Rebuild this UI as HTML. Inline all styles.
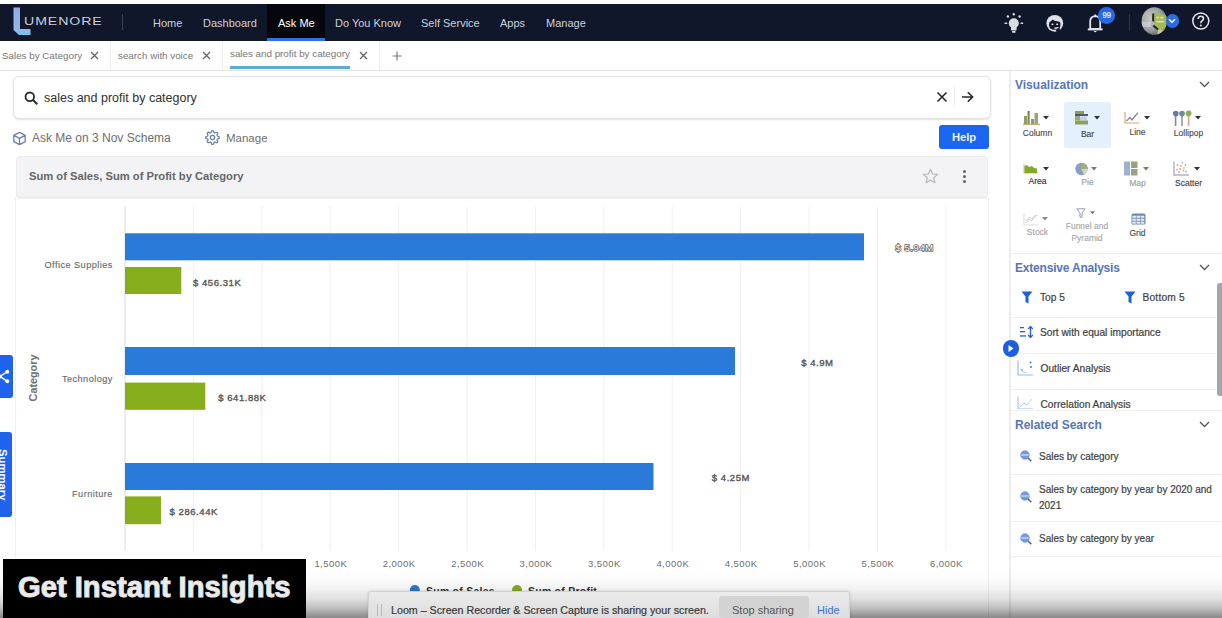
<!DOCTYPE html>
<html><head><meta charset="utf-8">
<style>
*{margin:0;padding:0;box-sizing:border-box}
html,body{width:1222px;height:618px;overflow:hidden;background:#fff;font-family:"Liberation Sans",sans-serif;position:relative}
.a{position:absolute;white-space:nowrap}
#nav{position:absolute;left:0;top:4px;width:1222px;height:37px;background:#10172a}
.nt{position:absolute;top:1px;height:37px;line-height:37px;font-size:11px;color:#cdd1dc}
#tabs{position:absolute;left:0;top:41px;width:1222px;height:30px;background:#fff;border-bottom:1px solid #e4e4e4}
.tt{position:absolute;font-size:9.8px;color:#777;top:9px;line-height:12px}
.vsep{position:absolute;width:1px;background:#e9e9e9}
.hsep{position:absolute;height:1px;background:#ededed}
.pt{position:absolute;font-size:12px;font-weight:bold;color:#5576ba;line-height:14px}
.vl{position:absolute;font-size:8.5px;color:#4c4c4c;line-height:10px;text-align:center;-webkit-text-stroke:0.15px currentColor}
.it{position:absolute;font-size:10.2px;color:#3e3e3e;line-height:12px;-webkit-text-stroke:0.2px #3e3e3e}
</style></head><body>

<!-- NAV -->
<div id="nav">
  <svg class="a" style="left:12px;top:2px" width="22" height="30" viewBox="0 0 22 30">
    <defs><linearGradient id="lg" x1="0" y1="0" x2="0" y2="1"><stop offset="0" stop-color="#8eaee6"/><stop offset="0.8" stop-color="#96b6ea"/><stop offset="1" stop-color="#6fc7e6"/></linearGradient></defs>
    <path d="M1.5 1.5 H8 V23 H18.5 V29 H7 L1.5 24 Z" fill="url(#lg)"/>
  </svg>
  <div class="a" style="left:23.9px;top:9.9px;font-size:11.4px;letter-spacing:0.75px;color:#ccd0da;line-height:14px;transform:scaleX(1.24);transform-origin:0 0">UMENORE</div>
  <div class="a" style="left:122px;top:10px;width:1px;height:16px;background:#3b4152"></div>
  <div class="nt" style="left:153px">Home</div>
  <div class="nt" style="left:203px">Dashboard</div>
  <div class="a" style="left:267px;top:0;width:58px;height:37px;background:#05070c"></div>
  <div class="a" style="left:267px;top:34px;width:58px;height:3px;background:#2f6fe4"></div>
  <div class="nt" style="left:278px;color:#fff">Ask Me</div>
  <div class="nt" style="left:335px">Do You Know</div>
  <div class="nt" style="left:421px">Self Service</div>
  <div class="nt" style="left:500px">Apps</div>
  <div class="nt" style="left:546px">Manage</div>
  <!-- right icons -->
  <svg class="a" style="left:1003px;top:8px" width="22" height="24" viewBox="0 0 22 24">
    <g fill="#d8dce6">
      <circle cx="10.8" cy="11.2" r="5"/>
      <path d="M8 14 H13.6 V17.5 Q13.6 18.4 12.7 18.4 H8.9 Q8 18.4 8 17.5 Z"/>
      <rect x="9" y="19" width="3.6" height="1.8" rx="0.6"/>
      <circle cx="10.8" cy="2.3" r="1.2"/>
      <circle cx="4.9" cy="4.5" r="1.2"/>
      <circle cx="16.6" cy="4.5" r="1.2"/>
      <rect x="1.4" y="10.4" width="3" height="1.6" rx="0.8"/>
      <rect x="17.3" y="10.4" width="3" height="1.6" rx="0.8"/>
    </g>
  </svg>
  <svg class="a" style="left:1043px;top:6px" width="25" height="25" viewBox="0 0 25 25">
    <circle cx="11.8" cy="13.3" r="8.4" fill="#dde0e8"/>
    <path d="M6 14.5 Q6 11.5 8 11 Q9.2 10.6 9.8 9.6 Q11 11.2 14 11.2 Q17.2 11.2 17.4 13.5 L17.4 15.5 Q17.2 19.8 11.6 19.8 Q6 19.8 6 14.5 Z" fill="#10172a"/>
    <rect x="8.4" y="13.5" width="2" height="1.5" rx="0.6" fill="#dde0e8"/>
    <rect x="13.2" y="13.5" width="2" height="1.5" rx="0.6" fill="#dde0e8"/>
    <path d="M11.5 18.3 Q14 18.3 15.6 17.4" fill="none" stroke="#dde0e8" stroke-width="1.5"/>
    <path d="M16.6 18.6 A8 8 0 0 1 13.3 21" fill="none" stroke="#10172a" stroke-width="2.4"/>
  </svg>
  <svg class="a" style="left:1086px;top:6px" width="18" height="24" viewBox="0 0 18 24">
    <path d="M4.2 18.8 V11.5 Q4.2 6.5 9.3 6.2 Q14.2 6.5 14.2 11.5 V18.8 Z" fill="none" stroke="#dfe2ea" stroke-width="1.8"/>
    <path d="M1.8 19.4 H16.6" stroke="#dfe2ea" stroke-width="2"/>
    <path d="M7.6 21 Q9.2 23.5 10.8 21 Z" fill="#dfe2ea"/>
    <rect x="8.4" y="4.4" width="1.7" height="2.2" fill="#dfe2ea"/>
  </svg>
  <div class="a" style="left:1098.3px;top:3px;width:16.6px;height:16.6px;border-radius:50%;background:#2668e6;color:#cfe0ff;font-size:8.5px;line-height:16.6px;text-align:center;font-weight:bold;letter-spacing:-0.3px">99</div>
  <div class="a" style="left:1129px;top:10px;width:1px;height:17px;background:#2c3344"></div>
  <svg class="a" style="left:1141px;top:3px" width="27" height="28" viewBox="0 0 27 28">
    <defs><clipPath id="av"><ellipse cx="13.3" cy="14.1" rx="12.7" ry="13.8"/></clipPath>
    <radialGradient id="avg" cx="0.35" cy="0.4" r="0.7"><stop offset="0" stop-color="#c9cacb"/><stop offset="0.6" stop-color="#9c9e9f"/><stop offset="1" stop-color="#5d6062"/></radialGradient></defs>
    <g clip-path="url(#av)">
      <rect x="0" y="0" width="27" height="28" fill="url(#avg)"/>
      <rect x="0" y="15" width="10" height="5" fill="#d6d8da" opacity=".6"/>
      <path d="M11.2 6.5 L13.6 6.5 L13.4 15 L11 14 Z" fill="#2b2d2e"/>
      <path d="M13.4 6.5 Q21 5 25.6 9 L25.6 23 Q20 24 15 22 L13.4 16 Z" fill="#a3bb57"/>
      <rect x="15.5" y="9.8" width="2.6" height="1.6" fill="#e8dcc0"/><rect x="19.5" y="9.8" width="2.6" height="1.6" fill="#e8dcc0"/>
      <rect x="15.5" y="13.8" width="7" height="1.6" fill="#e8dcc0"/>
      <path d="M12.3 18.5 L17 22.6" stroke="#1e2020" stroke-width="2"/>
      <path d="M17 23 Q21 21.5 24 24 L22 28 L16 28 Z" fill="#c9c0a0"/>
      <path d="M21 22 L26 21 L26 27 Z" fill="#7c8f4a"/>
      <path d="M0 24 Q8 27 13 26 L13 28 L0 28 Z" fill="#6d7072"/>
    </g>
  </svg>
  <div class="a" style="left:1165.6px;top:10px;width:13.6px;height:13.6px;border-radius:50%;background:#2a6de6"></div>
  <svg class="a" style="left:1168.4px;top:14.2px" width="8" height="6" viewBox="0 0 8 6"><path d="M1 1.3 L4 4.2 L7 1.3" fill="none" stroke="#fff" stroke-width="1.5"/></svg>
  <svg class="a" style="left:1190px;top:6px" width="22" height="22" viewBox="0 0 22 22">
    <circle cx="10.8" cy="11" r="8" fill="none" stroke="#e3e6ed" stroke-width="1.5"/>
    <path d="M8.2 8.9 Q8.2 6.2 10.8 6.2 Q13.5 6.2 13.5 8.6 Q13.5 10.1 11.9 11 Q10.8 11.6 10.8 13.3" fill="none" stroke="#e3e6ed" stroke-width="1.6"/>
    <circle cx="10.8" cy="15.6" r="1" fill="#e3e6ed"/>
  </svg>
</div>

<!-- TABS -->
<div id="tabs">
  <div class="tt" style="left:2px">Sales by Category</div>
  <svg class="a" style="left:90px;top:10px" width="9" height="9" viewBox="0 0 9 9"><path d="M1 1 L8 8 M8 1 L1 8" stroke="#666" stroke-width="1.3"/></svg>
  <div class="vsep" style="left:110px;top:0;height:29px;background:#eee"></div>
  <div class="tt" style="left:118px">search with voice</div>
  <svg class="a" style="left:202px;top:10px" width="9" height="9" viewBox="0 0 9 9"><path d="M1 1 L8 8 M8 1 L1 8" stroke="#666" stroke-width="1.3"/></svg>
  <div class="vsep" style="left:222px;top:0;height:29px;background:#eee"></div>
  <div class="tt" style="left:230px;top:7px">sales and profit by category</div>
  <div class="a" style="left:230px;top:25px;width:120px;height:3px;background:#5aaed6"></div>
  <svg class="a" style="left:359px;top:10px" width="9" height="9" viewBox="0 0 9 9"><path d="M1 1 L8 8 M8 1 L1 8" stroke="#666" stroke-width="1.3"/></svg>
  <div class="vsep" style="left:379px;top:0;height:29px;background:#eee"></div>
  <svg class="a" style="left:392px;top:10px" width="10" height="10" viewBox="0 0 10 10"><path d="M5 0.5 V9.5 M0.5 5 H9.5" stroke="#777" stroke-width="1.2"/></svg>
</div>

<!-- SEARCH -->
<div class="a" style="left:12.5px;top:75.5px;width:978px;height:43px;border:1px solid #e3e3e3;border-radius:6px;box-shadow:0 1px 2px rgba(0,0,0,.12);background:#fff"></div>
<svg class="a" style="left:24px;top:91px" width="15" height="14" viewBox="0 0 15 14">
  <circle cx="5.8" cy="5.8" r="4.3" fill="none" stroke="#2b2b2b" stroke-width="1.8"/>
  <path d="M9 9 L13.3 13.2" stroke="#2b2b2b" stroke-width="2"/>
</svg>
<div class="a" style="left:44px;top:91px;font-size:12.5px;color:#303030;line-height:15px">sales and profit by category</div>
<svg class="a" style="left:936px;top:91px" width="12" height="12" viewBox="0 0 12 12"><path d="M1.5 1.5 L10.5 10.5 M10.5 1.5 L1.5 10.5" stroke="#2a2a2a" stroke-width="1.6"/></svg>
<div class="a" style="left:954px;top:86px;width:1px;height:21px;background:#eee"></div>
<svg class="a" style="left:961px;top:91px" width="13" height="12" viewBox="0 0 13 12"><path d="M1 6 H11.5 M6.8 1.2 L11.6 6 L6.8 10.8" fill="none" stroke="#2a2a2a" stroke-width="1.6"/></svg>

<!-- schema row -->
<svg class="a" style="left:12px;top:131px" width="15" height="15" viewBox="0 0 15 15">
  <path d="M7.5 1.3 L13.2 4.3 V10.7 L7.5 13.7 L1.8 10.7 V4.3 Z M1.8 4.3 L7.5 7.3 L13.2 4.3 M7.5 7.3 V13.7" fill="none" stroke="#6a7fa8" stroke-width="1.3" stroke-linejoin="round"/>
</svg>
<div class="a" style="left:32px;top:131px;font-size:12px;color:#6e6e6e;line-height:15px">Ask Me on 3 Nov Schema</div>
<svg class="a" style="left:205px;top:130px" width="15" height="15" viewBox="0 0 24 24">
  <path d="M12 15.5a3.5 3.5 0 1 0 0-7 3.5 3.5 0 0 0 0 7z" fill="none" stroke="#6a7fa8" stroke-width="2"/>
  <path d="M19.4 15a1.65 1.65 0 0 0 .33 1.82l.06.06a2 2 0 1 1-2.83 2.83l-.06-.06a1.65 1.65 0 0 0-1.82-.33 1.65 1.650 0 0 0-1 1.51V21a2 2 0 1 1-4 0v-.09A1.65 1.65 0 0 0 9 19.4a1.65 1.65 0 0 0-1.82.33l-.06.06a2 2 0 1 1-2.83-2.830l.06-.06A1.65 1.65 0 0 0 4.68 15a1.65 1.65 0 0 0-1.51-1H3a2 2 0 1 1 0-4h.09A1.65 1.65 0 0 0 4.6 9a1.65 1.65 0 0 0-.33-1.82l-.06-.06a2 2 0 1 1 2.83-2.83l.06.06A1.65 1.65 0 0 0 9 4.68a1.65 1.65 0 0 0 1-1.51V3a2 2 0 1 1 4 0v.09a1.65 1.65 0 0 0 1 1.51 1.65 1.65 0 0 0 1.82-.33l.06-.06a2 2 0 1 1 2.83 2.83l-.06.06A1.65 1.65 0 0 0 19.4 9a1.65 1.65 0 0 0 1.51 1H21a2 2 0 1 1 0 4h-.09a1.65 1.65 0 0 0-1.51 1z" fill="none" stroke="#6a7fa8" stroke-width="2"/>
</svg>
<div class="a" style="left:226px;top:131px;font-size:11.5px;color:#6e6e6e;line-height:15px">Manage</div>
<div class="a" style="left:939px;top:125px;width:50px;height:24px;border-radius:3px;background:#1a66ee;color:#eef3ff;font-size:11.2px;font-weight:bold;line-height:24px;text-align:center">Help</div>

<!-- CARD -->
<div class="a" style="left:15.5px;top:155.5px;width:972px;height:42px;background:#f3f3f6;border:1px solid #ededf0;border-radius:4px;box-shadow:0 1px 1px rgba(0,0,0,.06)"></div>
<div class="a" style="left:29px;top:170px;font-size:11.2px;font-weight:bold;color:#666;line-height:13px">Sum of Sales, Sum of Profit by Category</div>
<svg class="a" style="left:922px;top:168px" width="17" height="16" viewBox="0 0 24 23"><path d="M12 1.8 L14.9 8.6 L22.2 9.2 L16.6 14 L18.3 21.2 L12 17.3 L5.7 21.2 L7.4 14 L1.8 9.2 L9.1 8.6 Z" fill="none" stroke="#b4b4b8" stroke-width="1.6" stroke-linejoin="round"/></svg>
<div class="a" style="left:963px;top:170px;width:3px;height:3px;border-radius:50%;background:#666"></div>
<div class="a" style="left:963px;top:175px;width:3px;height:3px;border-radius:50%;background:#666"></div>
<div class="a" style="left:963px;top:180px;width:3px;height:3px;border-radius:50%;background:#666"></div>
<div class="a" style="left:15px;top:198px;width:1px;height:420px;background:#efeff2"></div>
<div class="a" style="left:988px;top:198px;width:1px;height:420px;background:#f0f0f2"></div>

<!-- CHART -->
<svg class="a" style="left:0;top:0" width="1000" height="618" viewBox="0 0 1000 618">
  <g stroke="#efeff1" stroke-width="1">
    <path d="M125 206.5 V551 M193.4 206.5 V551 M261.8 206.5 V551 M330.2 206.5 V551 M398.6 206.5 V551 M467 206.5 V551 M535.4 206.5 V551 M603.8 206.5 V551 M672.2 206.5 V551 M740.6 206.5 V551 M809 206.5 V551 M877.4 206.5 V551 M945.8 206.5 V551"/>
  </g>
  <path d="M125 206.5 V551" stroke="#e3e3e8"/>
  <g fill="#2a7ad9">
    <rect x="125" y="233.3" width="739" height="27"/>
    <rect x="125" y="347" width="610" height="28"/>
    <rect x="125" y="463" width="528.5" height="27"/>
  </g>
  <g fill="#86ae1c">
    <rect x="125" y="267" width="56.3" height="27"/>
    <rect x="125" y="382.6" width="80.3" height="27.2"/>
    <rect x="125" y="496.4" width="36.1" height="27.8"/>
  </g>
  <g font-family="Liberation Sans" font-size="9.2" fill="#6c6c6c" letter-spacing="0.45" text-anchor="end" stroke="#6c6c6c" stroke-width="0.15">
    <text x="112.9" y="267.8">Office Supplies</text>
    <text x="112.9" y="382">Technology</text>
    <text x="112.9" y="497">Furniture</text>
  </g>
  <text transform="translate(37 378) rotate(-90)" text-anchor="middle" font-family="Liberation Sans" font-size="10.8" font-weight="bold" fill="#707070">Category</text>
  <g font-family="Liberation Sans" font-size="9.5" fill="#555" stroke="#555" stroke-width="0.35" letter-spacing="0.55">
    <text x="193" y="285.8">$ 456.31K</text>
    <text x="218.2" y="400.8">$ 641.88K</text>
    <text x="169.6" y="515.3">$ 286.44K</text>
    <text x="801.2" y="365.6">$ 4.9M</text>
    <text x="711.8" y="481.3">$ 4.25M</text>
    <text x="895.5" y="251.1" stroke="#666" stroke-width="1.6" fill="#fff" paint-order="stroke">$ 5.94M</text>
  </g>
  <g font-family="Liberation Sans" font-size="9.5" fill="#6e6e6e" letter-spacing="0.45" text-anchor="middle">
    <text x="330.8" y="567.3">1,500K</text>
    <text x="399.2" y="567.3">2,000K</text>
    <text x="467.6" y="567.3">2,500K</text>
    <text x="536" y="567.3">3,000K</text>
    <text x="604.4" y="567.3">3,500K</text>
    <text x="672.8" y="567.3">4,000K</text>
    <text x="741.2" y="567.3">4,500K</text>
    <text x="809.6" y="567.3">5,000K</text>
    <text x="878" y="567.3">5,500K</text>
    <text x="946.4" y="567.3">6,000K</text>
  </g>
  <circle cx="414.8" cy="590" r="5" fill="#2a7ad9"/>
  <circle cx="517" cy="590" r="5" fill="#86ae1c"/>
  <g font-family="Liberation Sans" font-size="10.4" font-weight="bold" fill="#333" letter-spacing="0.3">
    <text x="426" y="595">Sum of Sales</text>
    <text x="528" y="595">Sum of Profit</text>
  </g>
</svg>

<!-- left floating tabs -->
<div class="a" style="left:-3px;top:355px;width:16px;height:43px;border-radius:3px;background:#1e62ee"></div>
<svg class="a" style="left:0;top:368px" width="10" height="17" viewBox="0 0 10 17">
  <path d="M7.3 3.7 L0 8.4 L7.3 13.3" fill="none" stroke="#fff" stroke-width="1.4"/>
  <circle cx="7.3" cy="3.7" r="2" fill="#fff"/><circle cx="7.3" cy="13.3" r="2" fill="#fff"/><circle cx="0" cy="8.4" r="2" fill="#fff"/>
</svg>
<div class="a" style="left:-3px;top:431.5px;width:15px;height:85px;border-radius:3px;background:#1e62ee"></div>
<div class="a" style="left:8.5px;top:449px;width:0;height:0">
  <div style="position:absolute;left:0;top:0;transform:rotate(90deg);transform-origin:0 0;font-size:11.3px;font-weight:bold;color:#fff;line-height:12px;white-space:nowrap">Summary</div>
</div>

<!-- RIGHT PANEL -->
<div class="a" style="left:1009px;top:71px;width:2px;height:547px;background:#ececee"></div>
<div class="pt" style="left:1015px;top:78px">Visualization</div>
<svg class="a" style="left:1199px;top:81px" width="11" height="7" viewBox="0 0 11 7"><path d="M1 1 L5.5 5.5 L10 1" fill="none" stroke="#555" stroke-width="1.3"/></svg>
<div class="a" style="left:1064px;top:101.5px;width:47px;height:46px;background:#e4f1fc;border-radius:2px"></div>


<!-- viz icons row1 -->
<svg class="a" style="left:1023px;top:110px" width="17" height="15" viewBox="0 0 17 15">
  <rect x="1" y="6" width="3" height="9" fill="#8e9e5e"/><rect x="4.5" y="1" width="2.2" height="14" fill="#7b8a58"/>
  <rect x="8" y="9" width="3" height="6" fill="#8e9e5e"/><rect x="11.5" y="3" width="3.5" height="12" fill="#9aa67a"/>
  <rect x="0" y="13.8" width="17" height="1.2" fill="#c9a77a"/>
</svg>
<svg class="a" style="left:1043px;top:116px" width="6" height="4" viewBox="0 0 6 4"><path d="M0 0 H6 L3 3.5 Z" fill="#333"/></svg>
<div class="vl" style="left:1022px;top:128px;width:31px">Column</div>

<svg class="a" style="left:1074px;top:109px" width="15" height="16" viewBox="0 0 15 16">
  <rect x="1" y="2" width="9" height="4.5" fill="#8e9e5e"/><rect x="1" y="5" width="13" height="2" fill="#4b5870"/>
  <rect x="1" y="7" width="5" height="4.5" fill="#9aa67a"/><rect x="6" y="7.5" width="7" height="3.5" fill="#c8cde8"/>
  <rect x="1" y="11.5" width="13" height="4" fill="#8e9e5e"/>
</svg>
<svg class="a" style="left:1094px;top:116px" width="6" height="4" viewBox="0 0 6 4"><path d="M0 0 H6 L3 3.5 Z" fill="#333"/></svg>
<div class="vl" style="left:1072px;top:128.5px;width:31px;color:#444">Bar</div>

<svg class="a" style="left:1124px;top:111px" width="16" height="13" viewBox="0 0 16 13">
  <path d="M1 1 V12 H15" fill="none" stroke="#d9a46a" stroke-width="1.1"/>
  <path d="M2.5 10 L6 6.5 L8 9 L11.5 4.5 L14 2" fill="none" stroke="#7e8696" stroke-width="1.3"/>
</svg>
<svg class="a" style="left:1144px;top:116px" width="6" height="4" viewBox="0 0 6 4"><path d="M0 0 H6 L3 3.5 Z" fill="#333"/></svg>
<div class="vl" style="left:1122px;top:127px;width:31px">Line</div>

<svg class="a" style="left:1173px;top:110px" width="19" height="16" viewBox="0 0 19 16">
  <rect x="1.8" y="4" width="1.6" height="12" fill="#7d8aa4"/><circle cx="2.8" cy="3.6" r="2.8" fill="#6b7a98"/>
  <rect x="8.2" y="4" width="1.6" height="12" fill="#8f9aab"/><circle cx="9" cy="3.6" r="2.8" fill="#75869a"/>
  <rect x="14.8" y="4" width="1.6" height="12" fill="#c9a98a"/><circle cx="15.6" cy="3.4" r="2.9" fill="#8fb04e"/>
</svg>
<svg class="a" style="left:1195px;top:116px" width="6" height="4" viewBox="0 0 6 4"><path d="M0 0 H6 L3 3.5 Z" fill="#333"/></svg>
<div class="vl" style="left:1173px;top:128px;width:31px">Lollipop</div>

<!-- row2 -->
<svg class="a" style="left:1023px;top:162px" width="16" height="12" viewBox="0 0 16 12">
  <path d="M1 11 V2 M1 11 H15" stroke="#d9b0a0" stroke-width="1"/>
  <path d="M1.5 11 V4 L4 3 L6 5 L9 4 L11 6 L14 6.5 V11 Z" fill="#86a92a"/>
</svg>
<svg class="a" style="left:1043px;top:167px" width="6" height="4" viewBox="0 0 6 4"><path d="M0 0 H6 L3 3.5 Z" fill="#333"/></svg>
<div class="vl" style="left:1022px;top:176px;width:31px;color:#333">Area</div>

<svg class="a" style="left:1075px;top:162px" width="14" height="14" viewBox="0 0 14 14">
  <circle cx="6.5" cy="7" r="6.2" fill="#8aa0c0"/>
  <path d="M6.5 7 L6.5 0.8 A6.2 6.2 0 0 1 12.7 7 Z" fill="#a2ae78"/>
  <path d="M6.5 7 L12.7 7 A6.2 6.2 0 0 1 9 12.7 Z" fill="#d0d6cc"/>
</svg>
<svg class="a" style="left:1091px;top:167px" width="6" height="4" viewBox="0 0 6 4"><path d="M0 0 H6 L3 3.5 Z" fill="#777"/></svg>
<div class="vl" style="left:1072px;top:176.5px;width:31px;color:#a0a0a0">Pie</div>

<svg class="a" style="left:1124px;top:161px" width="14" height="15" viewBox="0 0 14 15">
  <rect x="0" y="0.5" width="6" height="14" fill="#9fb0cc"/>
  <rect x="7" y="0.5" width="6.5" height="6.5" fill="#97a37a"/>
  <rect x="7" y="8" width="6.5" height="6.5" fill="#98a286"/>
</svg>
<svg class="a" style="left:1143px;top:167px" width="6" height="4" viewBox="0 0 6 4"><path d="M0 0 H6 L3 3.5 Z" fill="#777"/></svg>
<div class="vl" style="left:1122px;top:177.5px;width:31px;color:#a0a0a0">Map</div>

<svg class="a" style="left:1173px;top:161px" width="16" height="15" viewBox="0 0 16 15">
  <path d="M1 0.5 V14 H16" fill="none" stroke="#a8b4c8" stroke-width="1.4"/>
  <g fill="#e0a872"><circle cx="4.5" cy="4" r="0.9"/><circle cx="8" cy="5" r="0.9"/><circle cx="12.5" cy="4" r="0.9"/><circle cx="4" cy="8.5" r="0.9"/><circle cx="7" cy="8" r="0.9"/><circle cx="10.5" cy="9.5" r="0.9"/><circle cx="13" cy="10.5" r="0.9"/><circle cx="6" cy="11" r="0.9"/></g>
  <g fill="#9aa"><circle cx="9.5" cy="2" r="0.8"/><circle cx="11" cy="7" r="0.8"/></g>
</svg>
<svg class="a" style="left:1194px;top:167px" width="6" height="4" viewBox="0 0 6 4"><path d="M0 0 H6 L3 3.5 Z" fill="#333"/></svg>
<div class="vl" style="left:1173px;top:177.5px;width:31px;color:#444">Scatter</div>

<!-- row3 -->
<svg class="a" style="left:1023px;top:213px" width="16" height="13" viewBox="0 0 16 13">
  <path d="M1 0.5 V12 H15" fill="none" stroke="#d8dce4" stroke-width="1.1"/>
  <path d="M2.5 10 L6 6 L8.5 8 L12 3 L14.5 2.5" fill="none" stroke="#c8ccd6" stroke-width="1"/>
  <path d="M3 8 L6.5 4 L9 6 L13 1.5" fill="none" stroke="#e8c0b8" stroke-width="0.9"/>
</svg>
<svg class="a" style="left:1042px;top:217px" width="6" height="4" viewBox="0 0 6 4"><path d="M0 0 H6 L3 3.5 Z" fill="#888"/></svg>
<div class="vl" style="left:1022px;top:227px;width:31px;color:#a8a8a8">Stock</div>

<svg class="a" style="left:1076px;top:208px" width="10" height="10" viewBox="0 0 10 10">
  <path d="M0.8 0.8 H9.2 L6 5 V9.2 H4 V5 Z" fill="none" stroke="#8b93a3" stroke-width="0.9"/>
</svg>
<svg class="a" style="left:1090px;top:211px" width="5" height="4" viewBox="0 0 6 4"><path d="M0 0 H6 L3 3.5 Z" fill="#777"/></svg>
<div class="vl" style="left:1062px;top:221px;width:50px;color:#a8a8a8;line-height:11.6px">Funnel and<br>Pyramid</div>

<svg class="a" style="left:1131px;top:212.5px" width="15" height="12" viewBox="0 0 15 12"><rect x="0.5" y="0.5" width="14" height="11" rx="1.5" fill="#7186ab"/><rect x="1.30" y="2.70" width="3.6" height="2.1" fill="#e6ecf6"/><rect x="5.50" y="2.70" width="3.6" height="2.1" fill="#e6ecf6"/><rect x="9.70" y="2.70" width="3.6" height="2.1" fill="#e6ecf6"/><rect x="1.30" y="5.65" width="3.6" height="2.1" fill="#e6ecf6"/><rect x="5.50" y="5.65" width="3.6" height="2.1" fill="#e6ecf6"/><rect x="9.70" y="5.65" width="3.6" height="2.1" fill="#e6ecf6"/><rect x="1.30" y="8.60" width="3.6" height="2.1" fill="#e6ecf6"/><rect x="5.50" y="8.60" width="3.6" height="2.1" fill="#e6ecf6"/><rect x="9.70" y="8.60" width="3.6" height="2.1" fill="#e6ecf6"/></svg>
<div class="vl" style="left:1122px;top:228px;width:31px;color:#4a4a4a">Grid</div>

<div class="hsep" style="left:1010px;top:252.5px;width:212px;background:#eeeeef"></div>

<!-- Extensive analysis -->
<div class="pt" style="left:1015px;top:261px;letter-spacing:-0.2px">Extensive Analysis</div>
<svg class="a" style="left:1199px;top:264px" width="11" height="7" viewBox="0 0 11 7"><path d="M1 1 L5.5 5.5 L10 1" fill="none" stroke="#555" stroke-width="1.3"/></svg>
<div class="a" style="left:1010px;top:282px;width:207px;height:127px;overflow:hidden">
  <svg class="a" style="left:11px;top:8.5px" width="12" height="13" viewBox="0 0 12 13"><path d="M0.5 0.5 H11.5 L7.5 5.5 V12.5 L4.5 11 V5.5 Z" fill="#1f5fd8"/></svg>
  <div class="it" style="left:30px;top:9.5px">Top 5</div>
  <svg class="a" style="left:114px;top:8.5px" width="12" height="13" viewBox="0 0 12 13"><path d="M0.5 0.5 H11.5 L7.5 5.5 V12.5 L4.5 11 V5.5 Z" fill="#1f5fd8"/></svg>
  <div class="it" style="left:132.5px;top:9.5px;letter-spacing:0.2px">Bottom 5</div>
  <div class="hsep" style="left:2px;top:34.5px;width:204px"></div>
  <svg class="a" style="left:9px;top:44px" width="15" height="12" viewBox="0 0 15 12">
    <g fill="#2a5fc8"><rect x="1" y="1" width="4" height="1.3"/><rect x="1" y="5" width="5" height="1.3"/><rect x="1" y="9.3" width="6" height="1.3"/></g>
    <path d="M11.5 1 V11" stroke="#2a5fc8" stroke-width="1.4"/><path d="M9.2 3 L11.5 0.5 L13.8 3 M9.2 9 L11.5 11.5 L13.8 9" fill="none" stroke="#2a5fc8" stroke-width="1.3"/>
  </svg>
  <div class="it" style="left:30px;top:45px">Sort with equal importance</div>
  <div class="hsep" style="left:2px;top:70.5px;width:204px"></div>
  <svg class="a" style="left:7px;top:78px" width="17" height="16" viewBox="0 0 17 16">
    <path d="M1 0.5 V15 H16" fill="none" stroke="#9bbbe6" stroke-width="1.2"/>
    <path d="M3 9 L6 12 L10 13" fill="none" stroke="#b8cfee" stroke-width="1"/>
    <circle cx="5" cy="10" r="1" fill="#9bbbe6"/><circle cx="13.5" cy="2.5" r="0.9" fill="#4a6a9a"/><circle cx="14" cy="7" r="0.9" fill="#4a6a9a"/>
  </svg>
  <div class="it" style="left:30.5px;top:81px">Outlier Analysis</div>
  <div class="hsep" style="left:2px;top:106.5px;width:204px"></div>
  <svg class="a" style="left:7px;top:114px" width="17" height="14" viewBox="0 0 17 14">
    <path d="M1 0.5 V13 H16" fill="none" stroke="#a9c2e6" stroke-width="1.1"/>
    <path d="M3 11 L7 7 L10 9 L15 3" fill="none" stroke="#c0d0e8" stroke-width="1"/>
  </svg>
  <div class="it" style="left:30.5px;top:116.5px">Correlation Analysis</div>
</div>
<div class="a" style="left:1216.5px;top:282.5px;width:5.5px;height:113px;border-radius:3px 0 0 3px;background:#a3a6ad"></div>
<div class="a" style="left:1002.5px;top:340px;width:16.5px;height:16.5px;border-radius:50%;background:#1d5fe0"></div>
<svg class="a" style="left:1007px;top:344px" width="8" height="9" viewBox="0 0 8 9"><path d="M1.5 1 L6.5 4.5 L1.5 8 Z" fill="#fff"/></svg>
<div class="hsep" style="left:1010px;top:409.5px;width:212px;background:#f0f0f0"></div>

<!-- Related search -->
<div class="pt" style="left:1015px;top:417.5px">Related Search</div>
<svg class="a" style="left:1199px;top:421px" width="11" height="7" viewBox="0 0 11 7"><path d="M1 1 L5.5 5.5 L10 1" fill="none" stroke="#555" stroke-width="1.3"/></svg>
<svg class="a" style="left:1018.5px;top:449px" width="15" height="14" viewBox="-1 -1 15 14"><circle cx="5" cy="5" r="4.3" fill="#7598e2" stroke="#5f86d8" stroke-width="0.6"/><path d="M1.2 5 H8.8" stroke="#e8efff" stroke-width="1.1"/><path d="M8 8 L11.3 11.2" stroke="#3f5fae" stroke-width="1.5"/></svg><div class="it" style="left:1039px;top:451px;font-size:10px">Sales by category</div>
<div class="hsep" style="left:1012px;top:474px;width:210px"></div>
<svg class="a" style="left:1018.5px;top:489.5px" width="15" height="14" viewBox="-1 -1 15 14"><circle cx="5" cy="5" r="4.3" fill="#7598e2" stroke="#5f86d8" stroke-width="0.6"/><path d="M1.2 5 H8.8" stroke="#e8efff" stroke-width="1.1"/><path d="M8 8 L11.3 11.2" stroke="#3f5fae" stroke-width="1.5"/></svg><div class="it" style="left:1039px;top:481.5px;font-size:10px;line-height:16.2px">Sales by category by year by 2020 and<br>2021</div>
<div class="hsep" style="left:1012px;top:520.5px;width:210px"></div>
<svg class="a" style="left:1018.5px;top:531.5px" width="15" height="14" viewBox="-1 -1 15 14"><circle cx="5" cy="5" r="4.3" fill="#7598e2" stroke="#5f86d8" stroke-width="0.6"/><path d="M1.2 5 H8.8" stroke="#e8efff" stroke-width="1.1"/><path d="M8 8 L11.3 11.2" stroke="#3f5fae" stroke-width="1.5"/></svg><div class="it" style="left:1039px;top:533px;font-size:10px">Sales by category by year</div>
<div class="hsep" style="left:1012px;top:556px;width:210px"></div>

<!-- bottom shade -->
<div class="a" style="left:0;top:565px;width:1222px;height:53px;background:linear-gradient(to bottom,rgba(0,0,0,0) 0%,rgba(0,0,0,0.01) 25%,rgba(0,0,0,0.05) 45%,rgba(0,0,0,0.13) 65%,rgba(0,0,0,0.26) 82%,rgba(0,0,0,0.47) 100%)"></div>
<!-- loom bar -->
<div class="a" style="left:367.5px;top:590.5px;width:482px;height:30px;background:linear-gradient(#ebebeb,#dcdcdc);border:1px solid #d2d2d2;border-radius:3px;box-shadow:0 0 3px rgba(0,0,0,.15)"></div>
<div class="a" style="left:377px;top:604px;width:1.2px;height:12px;background:#bbb"></div>
<div class="a" style="left:380.5px;top:604px;width:1.2px;height:12px;background:#bbb"></div>
<div class="a" style="left:391px;top:603.5px;font-size:10.7px;color:#3a3a3a;line-height:13px;-webkit-text-stroke:0.2px #3a3a3a">Loom – Screen Recorder &amp; Screen Capture is sharing your screen.</div>
<div class="a" style="left:719px;top:596px;width:90px;height:22px;background:#d3d3d3;border-radius:3px"></div>
<div class="a" style="left:732px;top:603.5px;font-size:11px;color:#555;line-height:13px">Stop sharing</div>
<div class="a" style="left:817px;top:603.5px;font-size:11px;color:#3a70c8;line-height:13px">Hide</div>
<!-- black box -->
<div class="a" style="left:3px;top:559px;width:303px;height:59px;background:#000"></div>
<div class="a" style="left:18px;top:571px;font-size:29.2px;font-weight:bold;color:#ececec;line-height:33px;-webkit-text-stroke:1px #e6e6e6">Get Instant Insights</div>
</body></html>
